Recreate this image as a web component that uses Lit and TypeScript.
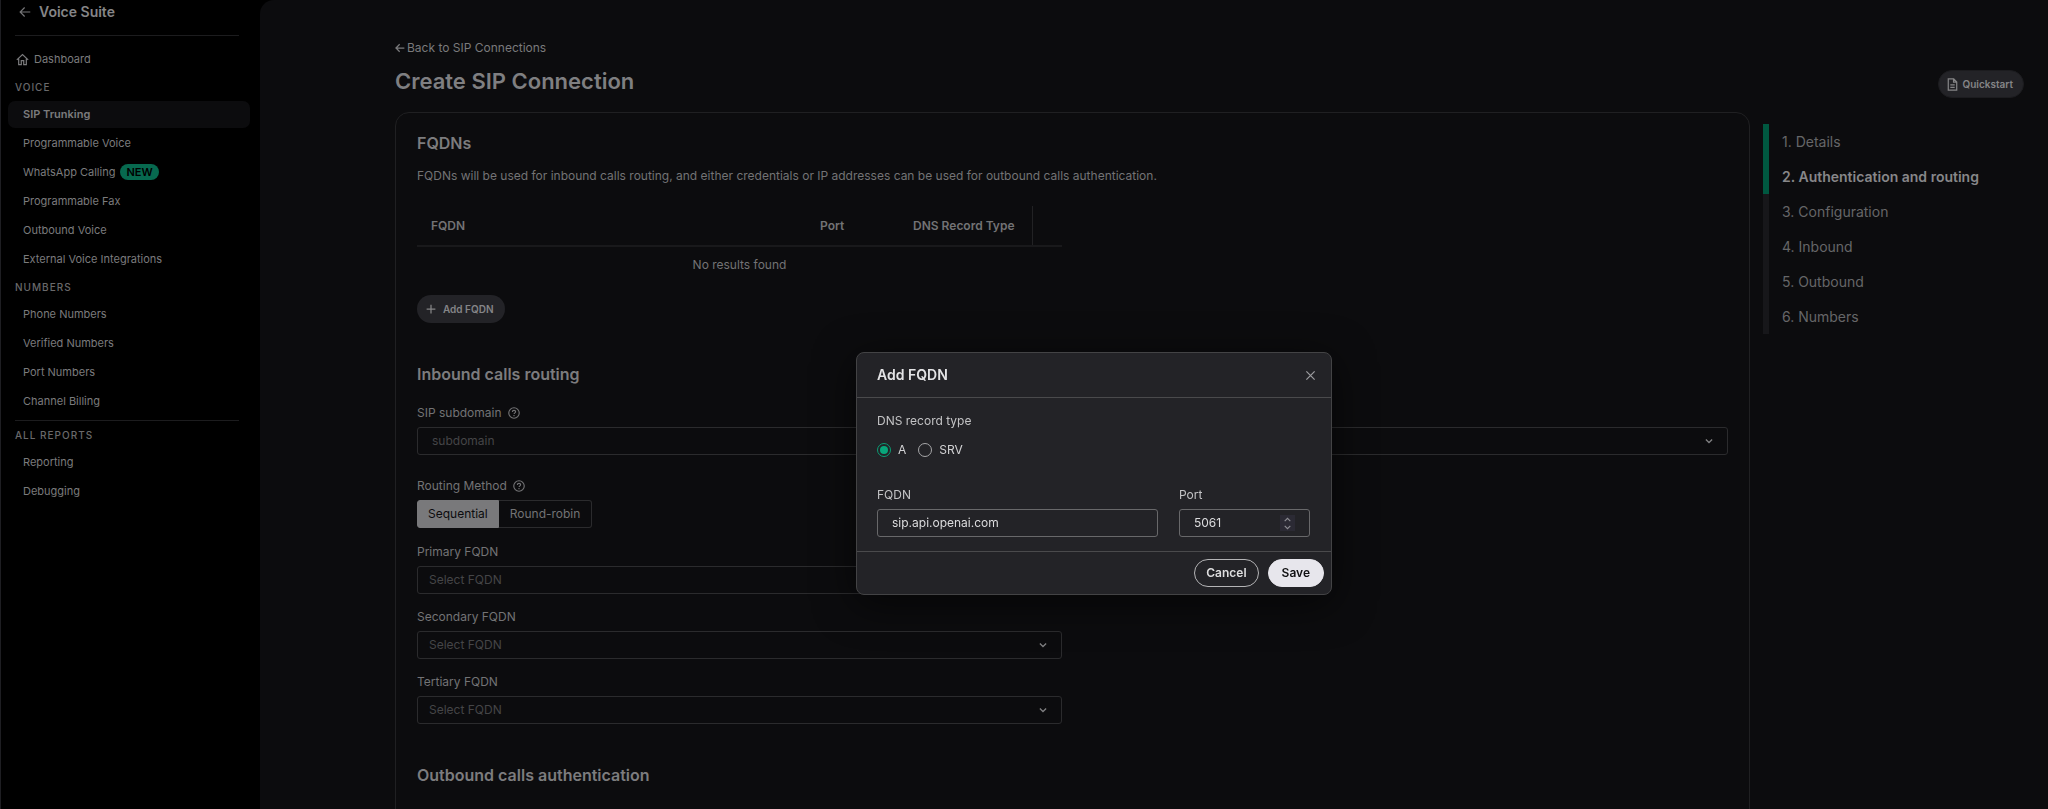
import { LitElement, html, css, svg, nothing } from "lit";
import { customElement, state } from "lit/decorators.js";
import { classMap } from "lit/directives/class-map.js";

interface NavItem {
  label: string;
  active?: boolean;
  badge?: string;
}

const VOICE: NavItem[] = [
  { label: "SIP Trunking", active: true },
  { label: "Programmable Voice" },
  { label: "WhatsApp Calling", badge: "NEW" },
  { label: "Programmable Fax" },
  { label: "Outbound Voice" },
  { label: "External Voice Integrations" },
];
const NUMBERS: NavItem[] = [
  { label: "Phone Numbers" },
  { label: "Verified Numbers" },
  { label: "Port Numbers" },
  { label: "Channel Billing" },
];
const REPORTS: NavItem[] = [{ label: "Reporting" }, { label: "Debugging" }];
const STEPS = ["Details", "Authentication and routing", "Configuration", "Inbound", "Outbound", "Numbers"];

const icon = (size: number, body: unknown, width = 1.5) => html`<svg
  width=${size} height=${size} viewBox="0 0 16 16" fill="none" stroke="currentColor"
  stroke-width=${width} aria-hidden="true">${body}</svg>`;

const arrowLeft = svg`<path d="M15 8H2M7.500 2 1.500 8l6 6"/>`;
const house = svg`<path d="M1 8.500 8 2l7 6.500M3.300 7v7.300h3.200V9.500h3v4.800h3.200V7"/>`;
const plus = svg`<path d="M8 1v14M1 8h14"/>`;
const doc = svg`<path d="M2.800 1.200h6.700l3.700 3.700v9.900H2.800zM9.300 1.400v3.700h3.700M5.300 8.500h5.400M5.300 11.500h5.400"/>`;
const help = svg`<circle cx="8" cy="8" r="7"/><path d="M5.800 6.500c0-1.300 1-2 2.200-2s2.200.8 2.200 1.900c0 1.400-2.100 1.600-2.100 3M8 10.700v1.500"/>`;
const chevron = svg`<path d="m3 5.500 5 5 5-5"/>`;
const cross = svg`<path d="m2 2 12 12M14 2 2 14"/>`;
const spinUp = svg`<path d="m3 11 5-5 5 5"/>`;

@customElement("side-nav")
export class SideNav extends LitElement {
  static styles = css`
    :host { display: block; color: #7b7b7d; font-size: 11px; line-height: 20px; }
    a { color: inherit; text-decoration: none; }
    .nav { padding: 2px 10px 0 7px; }
    .title { display: flex; align-items: center; gap: 8px; margin: 0 0 13px; padding-left: 11px;
      font-size: 14px; font-weight: 600; line-height: 20px; color: #858587; }
    .title svg { color: #767678; }
    .rule { height: 1px; margin: 0 11px 0 7px; border: 0; background: #1c1c1e; }
    .home { display: flex; align-items: center; gap: 5px; margin: 13px 0 10px; padding-left: 8px; }
    .label { margin: 6px 0; padding-left: 7px; font-size: 10px; font-weight: 500; letter-spacing: 1px;
      line-height: 16px; color: #69696b; text-transform: uppercase; }
    .list { display: flex; flex-direction: column; gap: 2px; margin: 0 0 5px; padding: 0; list-style: none; }
    .item { display: flex; align-items: center; gap: 5px; height: 27px; box-sizing: border-box;
      padding: 0 0 1px 15px; border-radius: 7px; }
    .active { background: #0c0c0e; font-weight: 600; }
    .badge { padding: 0 6px; border-radius: 8px; background: #07694f; color: #000; font-size: 11px;
      font-weight: 600; line-height: 16px; }
  `;
  private list(items: NavItem[]) {
    return html`<ul class="list">
      ${items.map((i) => html`<li>
        <a href="#" class=${classMap({ item: true, active: !!i.active })} aria-current=${i.active ? "page" : nothing}>
          ${i.label}${i.badge ? html`<span class="badge">${i.badge}</span>` : nothing}</a>
      </li>`)}
    </ul>`;
  }
  render() {
    return html`<nav class="nav">
      <h2 class="title">${icon(12, arrowLeft)}Voice Suite</h2>
      <hr class="rule" />
      <a class="home" href="#">${icon(13, house)}Dashboard</a>
      <h3 class="label">Voice</h3>
      ${this.list(VOICE)}
      <h3 class="label">Numbers</h3>
      ${this.list(NUMBERS)}
      <hr class="rule" />
      <h3 class="label">All reports</h3>
      ${this.list(REPORTS)}
    </nav>`;
  }
}

@customElement("step-list")
export class StepList extends LitElement {
  static styles = css`
    :host { display: block; }
    .steps { margin: 0; padding: 0; list-style: none; font-size: 14px; line-height: 35px; color: #666668; }
    .step { padding-left: 13px; border-left: 6px solid #17171a; }
    .done { border-color: #005840; }
    .current { color: #878789; font-weight: 600; }
  `;
  render() {
    return html`<ol class="steps">
      ${STEPS.map((s, i) => html`<li class=${classMap({ step: true, done: i < 2, current: i === 1 })}>${i + 1}. ${s}</li>`)}
    </ol>`;
  }
}

@customElement("sip-form")
export class SipForm extends LitElement {
  static styles = css`
    :host { display: block; color: #737375; font-size: 12px; line-height: 20px; }
    button, input, select { font: inherit; }
    .card { padding: 18px 21px 40px; border: 1px solid #202022; border-radius: 14px; }
    h2 { margin: 0; font-size: 16px; font-weight: 600; line-height: 24px; color: #7c7c7e; }
    .desc { margin: 11px 0 20px; }
    .cols { display: grid; grid-template-columns: 1fr 1fr; column-gap: 21px; }
    .table { width: 100%; border-collapse: collapse; table-layout: fixed; }
    .table th { height: 40px; padding: 0 0 0 14px; box-sizing: border-box; text-align: left; font-weight: 600;
      border-bottom: 2px solid #19191b; }
    .c-port { width: 93px; }
    .c-type { width: 133px; }
    .c-act { width: 30px; }
    .table th.edge { border-right: 1px solid #222224; }
    .table td { height: 36px; padding: 0; text-align: center; }
    .add { display: flex; align-items: center; gap: 7px; height: 28px; margin-top: 12px; padding: 0 11px 0 9px;
      border: 0; border-radius: 14px; background: #232327; color: #858587; font-size: 10px; font-weight: 600; }
    .section { margin: 39px 0 17px; }
    .field { display: flex; flex-direction: column; gap: 4px; }
    .subdomain { margin-bottom: 21px; }
    .method { margin: 0 0 14px; }
    .stack { display: flex; flex-direction: column; gap: 13px; }
    .label { display: flex; align-items: center; gap: 6px; }
    .control { display: grid; align-items: center; }
    .control > * { grid-area: 1 / 1; }
    .control svg { justify-self: end; margin-right: 14px; pointer-events: none; color: #808082; }
    .select { appearance: none; width: 100%; height: 28px; box-sizing: border-box; padding: 0 30px 0 11px;
      border: 1px solid #2b2b2d; border-radius: 3px; background: transparent; color: #454547; }
    .wide { padding-left: 14px; }
    .toggle { display: flex; align-self: flex-start; }
    .seg { display: flex; align-items: center; height: 28px; box-sizing: border-box; padding: 0 11px;
      border: 1px solid #2b2b2d; border-left: 0; border-radius: 0 3px 3px 0; }
    .seg:first-child { border: 1px solid #79797b; border-radius: 3px 0 0 3px; background: #79797b; color: #0c0c0e; padding: 0 10px; }
    .seg input { position: absolute; opacity: 0; pointer-events: none; }
  `;
  private fqdn(id: string, label: string) {
    return html`<div class="field">
      <label class="label" for=${id}>${label}</label>
      <div class="control">
        <select class="select" id=${id}><option>Select FQDN</option></select>
        ${icon(10, chevron, 2)}
      </div>
    </div>`;
  }
  render() {
    return html`<section class="card">
      <h2>FQDNs</h2>
      <p class="desc">FQDNs will be used for inbound calls routing, and either credentials or IP addresses can be used for outbound calls authentication.</p>
      <div class="cols">
        <table class="table">
          <colgroup><col /><col class="c-port" /><col class="c-type" /><col class="c-act" /></colgroup>
          <thead><tr><th>FQDN</th><th>Port</th><th class="edge">DNS Record Type</th><th></th></tr></thead>
          <tbody><tr><td colspan="4">No results found</td></tr></tbody>
        </table>
      </div>
      <button class="add" type="button">${icon(10, plus, 2)}Add FQDN</button>

      <h2 class="section">Inbound calls routing</h2>
      <div class="field subdomain">
        <label class="label" for="sub">SIP subdomain ${icon(12, help)}</label>
        <div class="control">
          <select class="select wide" id="sub"><option>subdomain</option></select>
          ${icon(10, chevron, 2)}
        </div>
      </div>
      <div class="field method" role="radiogroup" aria-labelledby="method">
        <span class="label" id="method">Routing Method ${icon(12, help)}</span>
        <div class="toggle">
          <label class="seg"><input type="radio" name="method" checked />Sequential</label>
          <label class="seg"><input type="radio" name="method" />Round-robin</label>
        </div>
      </div>
      <div class="cols">
        <div class="stack">
          ${this.fqdn("f1", "Primary FQDN")}
          ${this.fqdn("f2", "Secondary FQDN")}
          ${this.fqdn("f3", "Tertiary FQDN")}
        </div>
      </div>
      <h2 class="section">Outbound calls authentication</h2>
    </section>`;
  }
}

@customElement("fqdn-dialog")
export class FqdnDialog extends LitElement {
  @state() private port = 5061;
  static styles = css`
    :host { display: block; width: 476px; box-sizing: border-box; border: 1px solid #434345; border-radius: 8px;
      background: #232327; color: #c3c3c5; font-size: 12px; line-height: 20px; box-shadow: 0 8px 40px #0009; }
    button, input { font: inherit; }
    .head { display: flex; align-items: center; justify-content: space-between; height: 44px; padding: 0 15px 0 20px; }
    .head h2 { margin: 0; font-size: 14px; font-weight: 600; color: #e4e4e6; }
    .close { display: grid; padding: 0; border: 0; background: none; color: #9c9c9f; }
    .body { padding: 13px 21px 14px 20px; border: solid #4a4a4c; border-width: 1px 0; }
    .radios { display: flex; gap: 12px; margin: 0; padding: 0; border: 0; }
    .radios legend { margin-bottom: 9px; padding: 0; }
    .opt { display: flex; align-items: center; gap: 7px; color: #d2d2d4; }
    .radio { appearance: none; display: grid; place-content: center; width: 14px; height: 14px; margin: 0;
      box-sizing: border-box; border: 1px solid #a6a6a8; border-radius: 50%; }
    .radio:checked { border-color: #0a9c74; }
    .radio:checked::before { content: ""; width: 8px; height: 8px; border-radius: 50%; background: #08a67b; }
    .row { display: grid; grid-template-columns: 1fr 131px; column-gap: 21px; margin-top: 25px; }
    .field { display: flex; flex-direction: column; gap: 4px; }
    .box { display: flex; align-items: center; height: 28px; box-sizing: border-box; padding: 0 14px;
      border: 1px solid #68686a; border-radius: 3px; }
    .text { flex: 1; min-width: 0; padding: 0; border: 0; outline: 0; background: transparent; color: #dcdcde; appearance: textfield; }
    .text::-webkit-inner-spin-button { display: none; }
    .spin { display: flex; flex-direction: column; background: #2b2a34; }
    .spin button { display: grid; place-items: center; width: 15px; height: 8px; padding: 0; border: 0; background: none; color: #8e8e94; }
    .down svg { transform: rotate(180deg); }
    .foot { display: flex; justify-content: flex-end; gap: 9px; padding: 7px; }
    .btn { height: 28px; box-sizing: border-box; padding: 0 11px; border: 1px solid #b4b4b6; border-radius: 14px;
      background: transparent; color: #dededf; font-size: 12px; font-weight: 600; }
    .primary { padding: 0 13px; border-color: #e7e6ec; background: #e7e6ec; color: #111113; }
  `;
  render() {
    return html`
      <header class="head"><h2>Add FQDN</h2>
        <button class="close" type="button" aria-label="Close">${icon(11, cross, 1.8)}</button></header>
      <div class="body">
        <fieldset class="radios">
          <legend>DNS record type</legend>
          <label class="opt"><input class="radio" type="radio" name="type" checked />A</label>
          <label class="opt"><input class="radio" type="radio" name="type" />SRV</label>
        </fieldset>
        <div class="row">
          <div class="field"><label for="fqdn">FQDN</label>
            <div class="box"><input class="text" id="fqdn" value="sip.api.openai.com" /></div></div>
          <div class="field"><label for="port">Port</label>
            <div class="box"><input class="text" id="port" type="number" .value=${String(this.port)} />
              <span class="spin">
                <button type="button" aria-label="Increase" @click=${() => this.port++}>${icon(9, spinUp, 2)}</button>
                <button type="button" class="down" aria-label="Decrease" @click=${() => this.port--}>${icon(9, spinUp, 2)}</button>
              </span></div></div>
        </div>
      </div>
      <footer class="foot">
        <button class="btn" type="button">Cancel</button>
        <button class="btn primary" type="button">Save</button>
      </footer>`;
  }
}

@customElement("app-root")
export class AppRoot extends LitElement {
  static styles = css`
    :host { display: grid; grid-template-columns: 260px minmax(0, 1fr); height: 100vh; overflow: hidden;
      background: #000; font-family: Inter, "Liberation Sans", sans-serif; }
    .side { border-left: 1px solid #1e1e22; }
    .main { padding: 38px 24px 0 135px; border-radius: 14px 0 0 0; background: #0c0c0e; overflow: hidden; }
    .top { display: flex; justify-content: space-between; align-items: flex-end; height: 60px; margin-bottom: 14px; }
    .heading { align-self: flex-start; }
    .back { display: flex; align-items: center; gap: 2px; color: #7a7a7c; font-size: 12px; line-height: 20px; text-decoration: none; }
    h1 { margin: 9px 0 0; color: #7f7f81; font-size: 22px; font-weight: 600; line-height: 28px; }
    .quick { display: flex; align-items: center; gap: 4px; height: 28px; box-sizing: border-box; padding: 0 10px 0 7px;
      border: 1px solid #1c1c1f; border-radius: 14px; background: #232327; color: #858587; font: inherit; font-size: 10px; font-weight: 600; }
    .content { display: grid; grid-template-columns: minmax(0, 1fr) 261px; column-gap: 13px; align-items: start; }
    .steps { margin-top: 12px; }
    .overlay { position: fixed; inset: 0; display: flex; justify-content: center; align-items: flex-start; padding: 352px 0 0 140px; }
  `;
  render() {
    return html`
      <side-nav class="side"></side-nav>
      <main class="main">
        <div class="top">
          <div class="heading">
            <a class="back" href="#">${icon(10, arrowLeft, 2)}Back to SIP Connections</a>
            <h1>Create SIP Connection</h1>
          </div>
          <button class="quick" type="button">${icon(13, doc)}Quickstart</button>
        </div>
        <div class="content">
          <sip-form></sip-form>
          <step-list class="steps"></step-list>
        </div>
      </main>
      <div class="overlay"><fqdn-dialog role="dialog" aria-label="Add FQDN"></fqdn-dialog></div>`;
  }
}
